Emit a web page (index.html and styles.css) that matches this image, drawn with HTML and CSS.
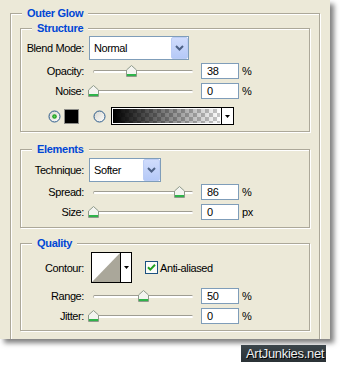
FILE: index.html
```html
<!DOCTYPE html>
<html lang="en">
<head>
    <meta charset="UTF-8" />
    <title>Outer Glow</title>
    <link rel="stylesheet" href="styles.css">
</head>
<body>
    <div class="panel">
        <div class="group group-outer">
            <div class="group-title">Outer Glow</div>

            <div class="group group-inner structure">
                <div class="group-title">Structure</div>

                <div class="row row-select">
                    <span class="label">Blend Mode:</span>
                    <div class="select select-blend">
                        <span class="select-value">Normal</span>
                        <span class="select-button">
                            <svg width="9" height="6" viewBox="0 0 9 6"><path d="M1 1L4.5 4.5L8 1" fill="none" stroke="#4d6185" stroke-width="2"/></svg>
                        </span>
                    </div>
                </div>

                <div class="row row-slider after-select">
                    <span class="label">Opacity:</span>
                    <div class="slider">
                        <div class="slider-track"></div>
                        <svg class="thumb" style="left: 38px" width="11" height="12" viewBox="0 0 11 12"><path d="M0.5 11.5V5L5.5 0.5L10.5 5V11.5Z" fill="#f4f4f0" stroke="#8e9a8a"/><path d="M1 10H10" stroke="#2fb34a" stroke-width="2"/></svg>
                    </div>
                    <div class="field">38</div>
                    <span class="unit">%</span>
                </div>

                <div class="row row-slider">
                    <span class="label">Noise:</span>
                    <div class="slider">
                        <div class="slider-track"></div>
                        <svg class="thumb" style="left: 0px" width="11" height="12" viewBox="0 0 11 12"><path d="M0.5 11.5V5L5.5 0.5L10.5 5V11.5Z" fill="#f4f4f0" stroke="#8e9a8a"/><path d="M1 10H10" stroke="#2fb34a" stroke-width="2"/></svg>
                    </div>
                    <div class="field">0</div>
                    <span class="unit">%</span>
                </div>

                <div class="row color-row">
                    <svg class="radio" width="13" height="13" viewBox="0 0 13 13">
                        <defs><linearGradient id="rg1" x1="0" y1="0" x2="1" y2="1"><stop offset="0" stop-color="#d6d5cc"/><stop offset="1" stop-color="#ffffff"/></linearGradient></defs>
                        <circle cx="6.5" cy="6.5" r="5.5" fill="url(#rg1)" stroke="#2a5a8a"/>
                        <circle cx="6.5" cy="6.5" r="2.3" fill="#21a121"/>
                        <circle cx="6.5" cy="6.5" r="1" fill="#62d062"/>
                    </svg>
                    <div class="swatch"></div>
                    <svg class="radio radio-second" width="13" height="13" viewBox="0 0 13 13">
                        <defs><linearGradient id="rg2" x1="0" y1="0" x2="1" y2="1"><stop offset="0" stop-color="#d6d5cc"/><stop offset="1" stop-color="#ffffff"/></linearGradient></defs>
                        <circle cx="6.5" cy="6.5" r="5.5" fill="url(#rg2)" stroke="#2a5a8a"/>
                    </svg>
                    <div class="gradient-picker">
                        <div class="gradient-fill"></div>
                        <div class="picker-arrow">
                            <svg width="5" height="3" viewBox="0 0 5 3"><path d="M0 0H5L2.5 3Z" fill="#000"/></svg>
                        </div>
                    </div>
                </div>
            </div>

            <div class="group group-inner elements">
                <div class="group-title">Elements</div>

                <div class="row row-select">
                    <span class="label">Technique:</span>
                    <div class="select select-technique">
                        <span class="select-value">Softer</span>
                        <span class="select-button">
                            <svg width="9" height="6" viewBox="0 0 9 6"><path d="M1 1L4.5 4.5L8 1" fill="none" stroke="#4d6185" stroke-width="2"/></svg>
                        </span>
                    </div>
                </div>

                <div class="row row-slider after-select-tight">
                    <span class="label">Spread:</span>
                    <div class="slider">
                        <div class="slider-track"></div>
                        <svg class="thumb" style="left: 86px" width="11" height="12" viewBox="0 0 11 12"><path d="M0.5 11.5V5L5.5 0.5L10.5 5V11.5Z" fill="#f4f4f0" stroke="#8e9a8a"/><path d="M1 10H10" stroke="#2fb34a" stroke-width="2"/></svg>
                    </div>
                    <div class="field">86</div>
                    <span class="unit">%</span>
                </div>

                <div class="row row-slider">
                    <span class="label">Size:</span>
                    <div class="slider">
                        <div class="slider-track"></div>
                        <svg class="thumb" style="left: 0px" width="11" height="12" viewBox="0 0 11 12"><path d="M0.5 11.5V5L5.5 0.5L10.5 5V11.5Z" fill="#f4f4f0" stroke="#8e9a8a"/><path d="M1 10H10" stroke="#2fb34a" stroke-width="2"/></svg>
                    </div>
                    <div class="field">0</div>
                    <span class="unit">px</span>
                </div>
            </div>

            <div class="group group-inner quality">
                <div class="group-title">Quality</div>

                <div class="row contour-row">
                    <span class="label">Contour:</span>
                    <div class="contour">
                        <svg class="contour-curve" width="28" height="29" viewBox="0 0 28 29"><path d="M0 29L28 0V29Z" fill="#aaa79a"/></svg>
                        <div class="picker-arrow">
                            <svg width="5" height="3" viewBox="0 0 5 3"><path d="M0 0H5L2.5 3Z" fill="#000"/></svg>
                        </div>
                    </div>
                    <svg class="checkbox" width="13" height="13" viewBox="0 0 13 13">
                        <rect x="0.5" y="0.5" width="12" height="12" fill="#fbfbf8" stroke="#1c5180"/>
                        <path d="M3 6.2L5.3 8.6L10 3.8" fill="none" stroke="#21a121" stroke-width="2"/>
                    </svg>
                    <span class="check-label">Anti-aliased</span>
                </div>

                <div class="row row-slider after-contour">
                    <span class="label">Range:</span>
                    <div class="slider">
                        <div class="slider-track"></div>
                        <svg class="thumb" style="left: 50px" width="11" height="12" viewBox="0 0 11 12"><path d="M0.5 11.5V5L5.5 0.5L10.5 5V11.5Z" fill="#f4f4f0" stroke="#8e9a8a"/><path d="M1 10H10" stroke="#2fb34a" stroke-width="2"/></svg>
                    </div>
                    <div class="field">50</div>
                    <span class="unit">%</span>
                </div>

                <div class="row row-slider">
                    <span class="label">Jitter:</span>
                    <div class="slider">
                        <div class="slider-track"></div>
                        <svg class="thumb" style="left: 0px" width="11" height="12" viewBox="0 0 11 12"><path d="M0.5 11.5V5L5.5 0.5L10.5 5V11.5Z" fill="#f4f4f0" stroke="#8e9a8a"/><path d="M1 10H10" stroke="#2fb34a" stroke-width="2"/></svg>
                    </div>
                    <div class="field">0</div>
                    <span class="unit">%</span>
                </div>
            </div>
        </div>
    </div>

    <div class="watermark">ArtJunkies.net</div>
</body>
</html>
```

FILE: styles.css
```css
body {
    margin: 0;
    background-color: #fff;
    font-family: "Liberation Sans", Arial, sans-serif;
    font-size: 11px;
    letter-spacing: -0.4px;
    color: #000;
}

.panel {
    width: 330px;
    height: 339px;
    box-sizing: border-box;
    padding: 13px 0 0 10px;
    background-color: #ece9d8;
    box-shadow: 4px 4px 5px rgba(0,0,0,0.5);
    overflow: hidden;
}

/* etched group boxes */
.group {
    border: 1px solid #aca899;
    box-shadow: inset 1px 1px 0 #fff, 1px 1px 0 #fff;
}

.group-outer {
    width: 310px;
    height: 400px;
    box-sizing: border-box;
}

.group-inner {
    margin: 0 9px;
}

/* title sits on the top border, takes no height */
.group-title {
    width: max-content;
    height: 13px;
    line-height: 13px;
    margin: -7px 0 -6px 11px;
    padding: 0 5px;
    background-color: #ece9d8;
    color: #0046d5;
    font-weight: bold;
    letter-spacing: -0.3px;
}

.structure {
    margin-top: 14px;
    padding-bottom: 6px;
}

.structure .row-select {
    margin-top: 7px;
}

.elements {
    margin-top: 17px;
    padding-bottom: 7px;
}

.elements .row-select {
    margin-top: 8px;
}

.quality {
    margin-top: 15px;
    padding-bottom: 6px;
}

.row {
    display: flex;
    align-items: center;
}

.label {
    width: 63px;
    flex: none;
    text-align: right;
}

.row-select {
    height: 24px;
}

.row-slider {
    height: 16px;
    margin-top: 4px;
}

.row-slider.after-select {
    margin-top: 3px;
}

.row-slider.after-select-tight {
    margin-top: 2px;
}

.row-slider.after-contour {
    margin-top: 5px;
}

/* xp combo box */
.select {
    margin-left: 5px;
    height: 24px;
    box-sizing: border-box;
    display: flex;
    border: 1px solid #7f9db9;
    background-color: #fff;
}

.select-blend {
    width: 100px;
}

.select-technique {
    width: 72px;
}

.select-value {
    flex: 1;
    padding-left: 4px;
    line-height: 22px;
}

.select-button {
    width: 17px;
    box-sizing: border-box;
    display: flex;
    align-items: center;
    justify-content: center;
    border: 1px solid #bccdf5;
    border-radius: 2px;
    background: linear-gradient(#d0dcfc, #b5c9f7);
}

/* slider */
.slider {
    position: relative;
    width: 110px;
    height: 16px;
    margin-left: 4px;
    flex: none;
}

.slider-track {
    height: 3px;
    margin: 7px 5px 0;
    box-sizing: border-box;
    border-top: 1px solid #9f9d92;
    border-left: 1px solid #b4b2a6;
    border-radius: 2px;
    background-color: #fff;
}

.thumb {
    position: absolute;
    top: 2px;
}

.field {
    width: 38px;
    height: 16px;
    margin-left: 3px;
    box-sizing: border-box;
    padding-left: 5px;
    border: 1px solid #7f9db9;
    background-color: #fff;
    line-height: 14px;
    flex: none;
}

.unit {
    margin-left: 3px;
}

/* color / gradient row */
.color-row {
    height: 18px;
    margin-top: 8px;
    padding-left: 27px;
}

.swatch {
    width: 15px;
    height: 15px;
    margin-left: 3px;
    box-sizing: border-box;
    border: 1px solid #8c8c88;
    background-color: #000;
}

.radio-second {
    margin-left: 14px;
}

.gradient-picker {
    width: 123px;
    height: 18px;
    margin-left: 5px;
    box-sizing: border-box;
    display: flex;
    border: 1px solid #000;
    background-color: #fff;
}

.gradient-fill {
    flex: 1;
    border: 1px solid #fff;
    background:
        linear-gradient(to right, #000, rgba(0,0,0,0)),
        conic-gradient(#c8c8c8 25%, #fff 0 50%, #c8c8c8 0 75%, #fff 0) 0 0 / 8px 8px;
}

.picker-arrow {
    width: 11px;
    display: flex;
    align-items: center;
    justify-content: center;
    border-left: 1px solid #000;
}

/* contour row */
.contour-row {
    height: 31px;
    margin-top: 8px;
}

.contour {
    width: 41px;
    height: 31px;
    margin-left: 7px;
    box-sizing: border-box;
    display: flex;
    border: 1px solid #000;
    background-color: #fff;
}

.contour-curve {
    display: block;
}

.contour .picker-arrow {
    width: 10px;
}

.checkbox {
    margin-left: 13px;
}

.check-label {
    margin-left: 2px;
}

.watermark {
    width: 85px;
    height: 17px;
    margin: 6px 0 0 241px;
    box-sizing: border-box;
    padding-left: 5px;
    background: linear-gradient(#3c464b, #2a3135);
    color: #eef0f0;
    font-size: 13px;
    line-height: 17px;
    letter-spacing: -0.3px;
    text-shadow: 1px 1px 0 #000;
}
```
